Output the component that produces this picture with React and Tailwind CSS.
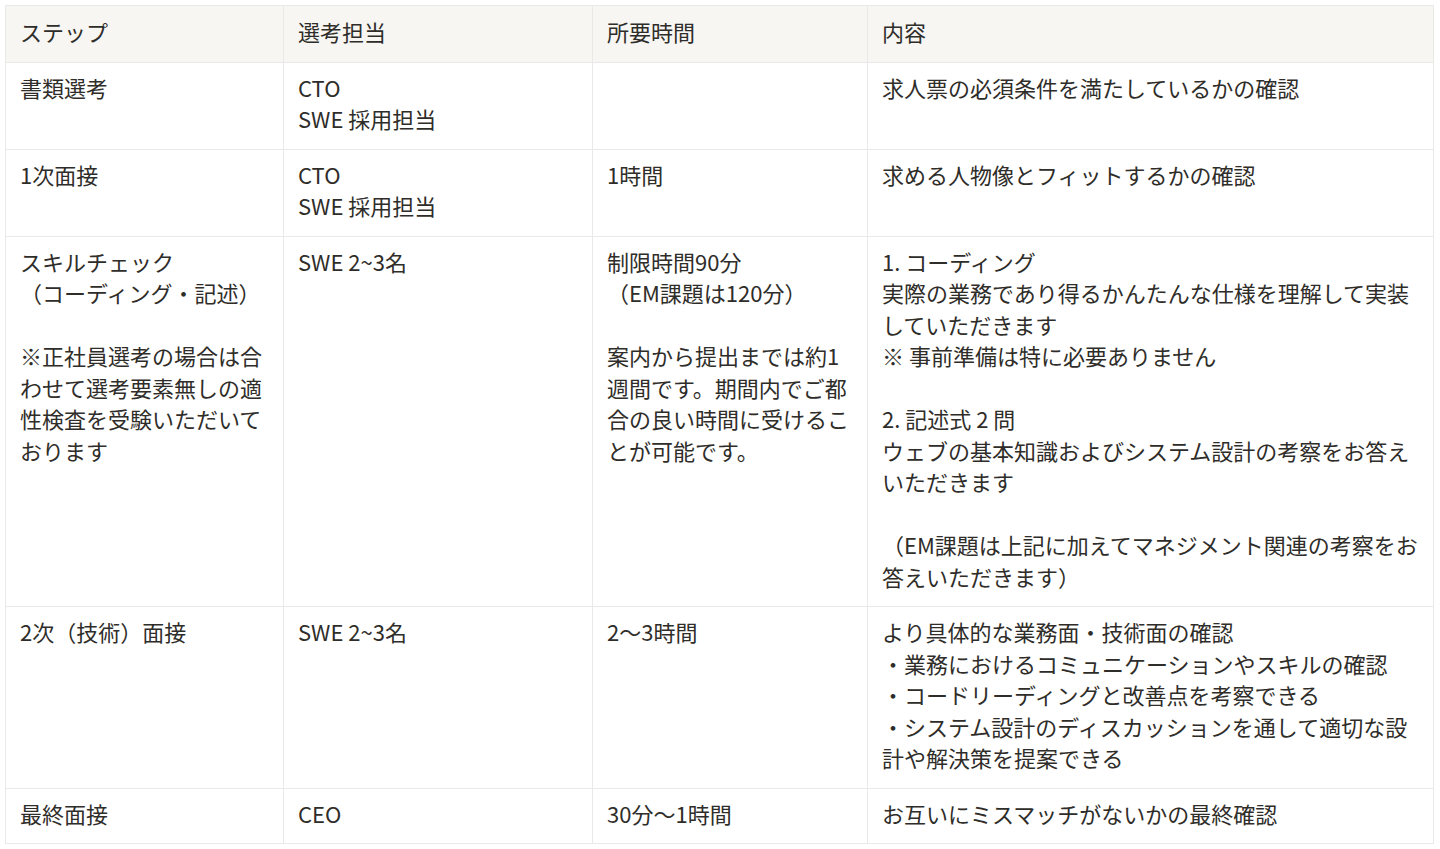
import React from 'react';

const rows = [
  {
    step: ['書類選考'],
    owner: ['CTO', 'SWE 採用担当'],
    time: [],
    detail: ['求人票の必須条件を満たしているかの確認'],
  },
  {
    step: ['1次面接'],
    owner: ['CTO', 'SWE 採用担当'],
    time: ['1時間'],
    detail: ['求める人物像とフィットするかの確認'],
  },
  {
    step: [
      'スキルチェック',
      '（コーディング・記述）',
      '',
      '※正社員選考の場合は合',
      'わせて選考要素無しの適',
      '性検査を受験いただいて',
      'おります',
    ],
    owner: ['SWE 2~3名'],
    time: [
      '制限時間90分',
      '（EM課題は120分）',
      '',
      '案内から提出までは約1',
      '週間です。期間内でご都',
      '合の良い時間に受けるこ',
      'とが可能です。',
    ],
    detail: [
      '1. コーディング',
      '実際の業務であり得るかんたんな仕様を理解して実装',
      'していただきます',
      '※ 事前準備は特に必要ありません',
      '',
      '2. 記述式 2 問',
      'ウェブの基本知識およびシステム設計の考察をお答え',
      'いただきます',
      '',
      '（EM課題は上記に加えてマネジメント関連の考察をお',
      '答えいただきます）',
    ],
  },
  {
    step: ['2次（技術）面接'],
    owner: ['SWE 2~3名'],
    time: ['2〜3時間'],
    detail: [
      'より具体的な業務面・技術面の確認',
      '・業務におけるコミュニケーションやスキルの確認',
      '・コードリーディングと改善点を考察できる',
      '・システム設計のディスカッションを通して適切な設',
      '計や解決策を提案できる',
    ],
  },
  {
    step: ['最終面接'],
    owner: ['CEO'],
    time: ['30分〜1時間'],
    detail: ['お互いにミスマッチがないかの最終確認'],
  },
];

const Lines = ({ lines }) => (
  <>
    {lines.map((line, i) => (
      <div key={i} className="h-[31.5px] whitespace-nowrap">
        {line}
      </div>
    ))}
  </>
);

const cell = 'border border-[#e9e9e7] pl-[14px] pr-4 align-top text-left font-normal';

export default function App() {
  return (
    <div
      className="bg-white min-h-screen p-[5px] text-[#2f2d29] text-[22px] leading-[31.5px]"
      style={{ fontFamily: '"Noto Sans CJK JP", "Noto Sans", sans-serif' }}
    >
      <table className="table-fixed border-collapse w-[1428px]">
        <colgroup>
          <col className="w-[278px]" />
          <col className="w-[309px]" />
          <col className="w-[275px]" />
          <col className="w-[566px]" />
        </colgroup>
        <thead>
          <tr className="bg-[#f7f6f3]">
            <th className={`${cell} pt-[10px] pb-[14px]`}>ステップ</th>
            <th className={`${cell} pt-[10px] pb-[14px]`}>選考担当</th>
            <th className={`${cell} pt-[10px] pb-[14px]`}>所要時間</th>
            <th className={`${cell} pt-[10px] pb-[14px]`}>内容</th>
          </tr>
        </thead>
        <tbody>
          {rows.map((row, i) => (
            <tr key={i}>
              <td className={`${cell} pt-[9px] pb-[14px]`}><Lines lines={row.step} /></td>
              <td className={`${cell} pt-[9px] pb-[14px]`}><Lines lines={row.owner} /></td>
              <td className={`${cell} pt-[9px] pb-[14px]`}><Lines lines={row.time} /></td>
              <td className={`${cell} pt-[9px] pb-[14px]`}><Lines lines={row.detail} /></td>
            </tr>
          ))}
        </tbody>
      </table>
    </div>
  );
}
